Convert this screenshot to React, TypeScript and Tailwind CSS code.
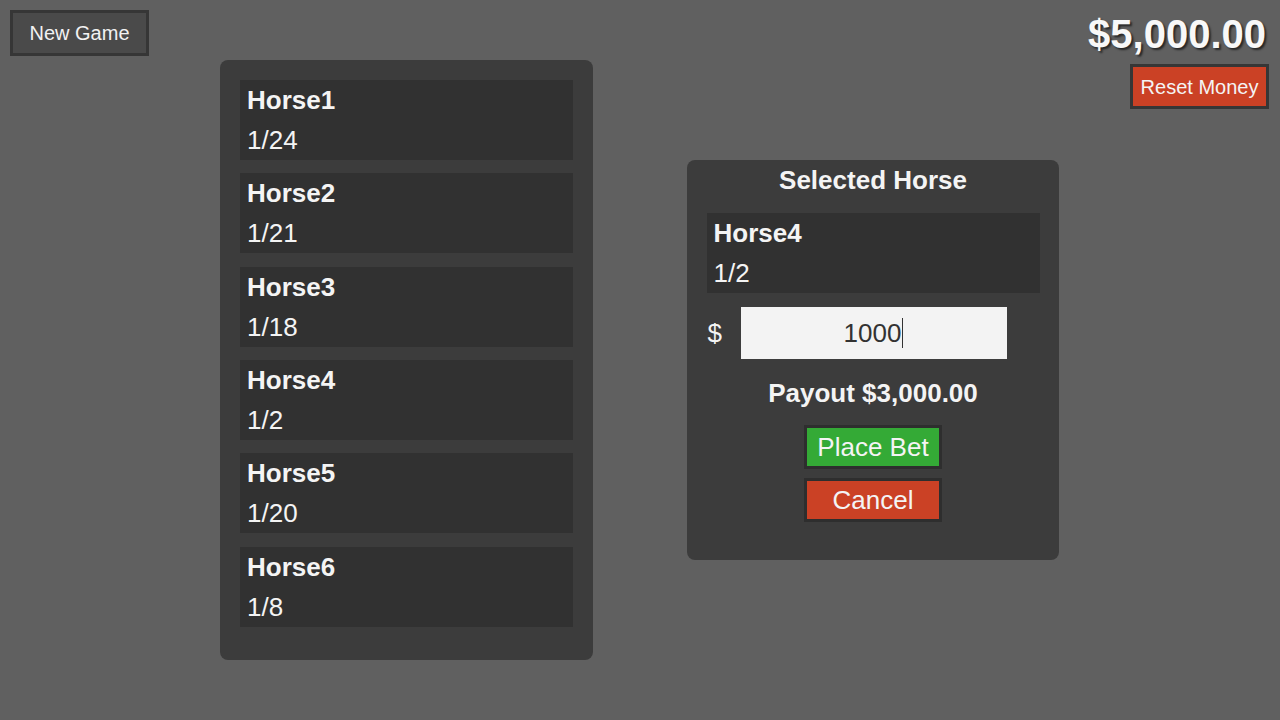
import React from "react";

type Horse = {
  name: string;
  odds: string;
};

const horses: Horse[] = [
  { name: "Horse1", odds: "1/24" },
  { name: "Horse2", odds: "1/21" },
  { name: "Horse3", odds: "1/18" },
  { name: "Horse4", odds: "1/2" },
  { name: "Horse5", odds: "1/20" },
  { name: "Horse6", odds: "1/8" },
];

function HorseCard({ horse }: { horse: Horse }) {
  return (
    <div className="h-[80px] w-[333px] bg-[#313131] px-[7px] text-[26px] leading-[40px] text-[#f4f4f4]">
      <div className="font-bold">{horse.name}</div>
      <div>{horse.odds}</div>
    </div>
  );
}

export default function App() {
  const selected = horses[3];

  return (
    <div
      className="flex h-screen w-full items-start overflow-hidden bg-[#606060] pl-[10px] pr-[11px] pt-[10px]"
      style={{ fontFamily: '"Liberation Sans", Arial, sans-serif' }}
    >
      {/* NEW GAME */}
      <button className="h-[46px] w-[139px] shrink-0 border-[3px] border-[#363636] bg-[#4a4a4a] text-[20px] text-[#f2f2f2]">
        New Game
      </button>

      {/* HORSE LIST */}
      <div className="ml-[71px] mt-[50px] flex h-[600px] w-[373px] shrink-0 flex-col gap-[13.33px] rounded-[8px] bg-[#3c3c3c] p-[20px]">
        {horses.map((horse) => (
          <HorseCard key={horse.name} horse={horse} />
        ))}
      </div>

      {/* SELECTED HORSE */}
      <div className="ml-[94px] mt-[150px] flex h-[400px] w-[372px] shrink-0 flex-col items-center rounded-[8px] bg-[#3c3c3c]">
        <div className="h-[40px] text-[26px] font-bold leading-[40px] text-[#f4f4f4]">
          Selected Horse
        </div>

        <div className="mt-[13px]">
          <HorseCard horse={selected} />
        </div>

        <div className="mt-[14px] flex h-[52px] w-[333px] items-center">
          <span className="w-[34px] pl-[1px] text-[26px] text-[#f4f4f4]">$</span>
          <div className="flex h-[52px] w-[266px] items-center justify-center bg-[#f3f3f3] text-[26px] text-[#323232]">
            <span>1000</span>
            <span className="ml-[1px] h-[30px] w-[1px] bg-[#323232]" />
          </div>
        </div>

        <div className="mt-[14px] h-[40px] text-[26px] font-bold leading-[40px] text-[#f4f4f4]">
          Payout $3,000.00
        </div>

        <button className="mt-[12px] h-[44px] w-[138px] border-[3px] border-[#2e2e2e] bg-[#34aa36] text-[26px] text-[#f4f4f4]">
          Place Bet
        </button>
        <button className="mt-[9px] h-[44px] w-[138px] border-[3px] border-[#2e2e2e] bg-[#cb4125] text-[26px] text-[#f4f4f4]">
          Cancel
        </button>
      </div>

      {/* MONEY */}
      <div className="flex flex-1 flex-col items-end">
        <div className="h-[48px] pr-[3px] text-[40px] font-bold leading-[48px] text-[#f8f8f8] [text-shadow:2px_2px_2px_rgba(0,0,0,0.6)]">
          $5,000.00
        </div>
        <button className="mt-[6px] h-[45px] w-[139px] border-[3px] border-[#363636] bg-[#cb4125] text-[20px] text-[#f4f4f4]">
          Reset Money
        </button>
      </div>
    </div>
  );
}
